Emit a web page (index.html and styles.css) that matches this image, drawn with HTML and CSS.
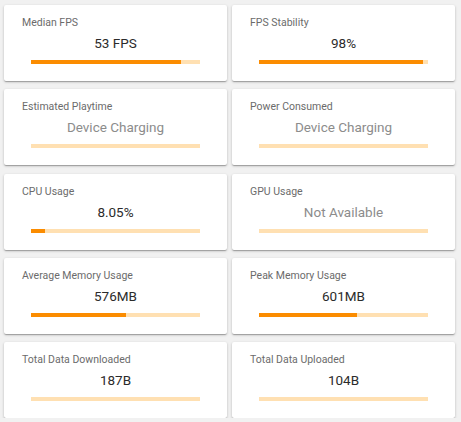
FILE: index.html
```html
<!DOCTYPE html>
<html lang="en">
<head>
    <meta charset="UTF-8">
    <meta name="viewport" content="width=device-width, initial-scale=1.0">
    <title>Session Stats</title>
    <link rel="stylesheet" href="styles.css">
</head>
<body>
    <div class="stats">
        <div class="card">
            <div class="label">Median FPS</div>
            <div class="value">53 FPS</div>
            <div class="track"><div class="fill" style="width: 89%"></div></div>
        </div>
        <div class="card">
            <div class="label">FPS Stability</div>
            <div class="value">98%</div>
            <div class="track"><div class="fill" style="width: 97%"></div></div>
        </div>

        <div class="card">
            <div class="label">Estimated Playtime</div>
            <div class="value muted">Device Charging</div>
            <div class="track"></div>
        </div>
        <div class="card">
            <div class="label">Power Consumed</div>
            <div class="value muted">Device Charging</div>
            <div class="track"></div>
        </div>

        <div class="card">
            <div class="label">CPU Usage</div>
            <div class="value">8.05%</div>
            <div class="track"><div class="fill" style="width: 8%"></div></div>
        </div>
        <div class="card">
            <div class="label">GPU Usage</div>
            <div class="value muted">Not Available</div>
            <div class="track"></div>
        </div>

        <div class="card">
            <div class="label">Average Memory Usage</div>
            <div class="value">576MB</div>
            <div class="track"><div class="fill" style="width: 56%"></div></div>
        </div>
        <div class="card">
            <div class="label">Peak Memory Usage</div>
            <div class="value">601MB</div>
            <div class="track"><div class="fill" style="width: 58%"></div></div>
        </div>

        <div class="card">
            <div class="label">Total Data Downloaded</div>
            <div class="value">187B</div>
            <div class="track"></div>
        </div>
        <div class="card">
            <div class="label">Total Data Uploaded</div>
            <div class="value">104B</div>
            <div class="track"></div>
        </div>
    </div>
</body>
</html>
```

FILE: styles.css
```css
body {
    margin: 0;
    padding: 5px 6px 0 4px;
    background-color: #f1f1f1;
    font-family: Roboto, "Liberation Sans", sans-serif;
}
.stats {
    display: grid;
    grid-template-columns: 1fr 1fr;
    gap: 8.25px 5px;
    width: 451px;
}
.card {
    background-color: white;
    border-radius: 2px;
    padding: 11px 18px 17px 18px;
    box-shadow: 0 1px 3px rgba(0, 0, 0, 0.2), 0 1px 1px rgba(0, 0, 0, 0.14), 0 2px 1px -1px rgba(0, 0, 0, 0.12);
}
.label {
    font-size: 10.5px;
    line-height: 14px;
    color: #6b6b6b;
}
.value {
    margin-top: 4px;
    font-size: 13.5px;
    line-height: 18px;
    color: #2b2b2b;
    text-align: center;
}
.value.muted {
    color: #8c8c8c;
}
.track {
    margin: 8px 9px 0 9px;
    height: 4px;
    background-color: #ffe0b2;
}
.fill {
    height: 100%;
    background-color: #fb8c00;
}
```
